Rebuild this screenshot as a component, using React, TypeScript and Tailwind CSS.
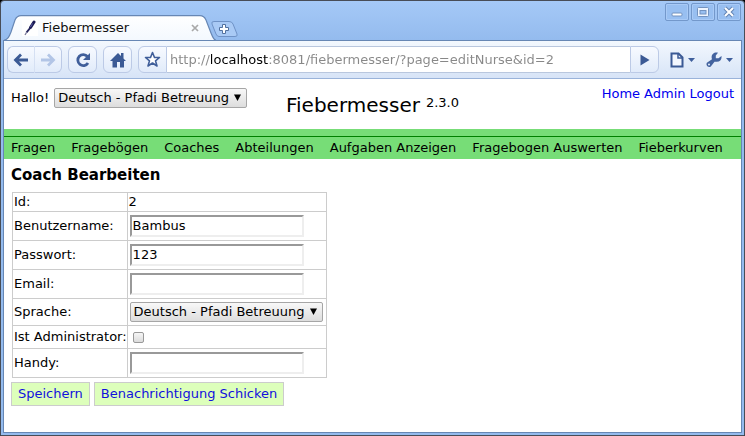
import type { ReactNode } from "react";

const navItems = [
  "Fragen",
  "Fragebögen",
  "Coaches",
  "Abteilungen",
  "Aufgaben Anzeigen",
  "Fragebogen Auswerten",
  "Fieberkurven",
];

function Caret() {
  return (
    <svg width="7" height="4" viewBox="0 0 7 4" aria-hidden="true">
      <path d="M0 0h7L3.5 4z" fill="#3f5f9c" />
    </svg>
  );
}

function WindowButton({ label, children }: { label: string; children: ReactNode }) {
  return (
    <button
      type="button"
      aria-label={label}
      className="flex h-[18px] w-6 items-center justify-center rounded-[2px] border border-[#7398cb] bg-[#98bff1] shadow-[inset_0_0_0_1px_#a9caf6]"
    >
      <svg width="14" height="12" viewBox="0 0 14 12" fill="none" aria-hidden="true">
        {children}
      </svg>
    </button>
  );
}

function TabStrip() {
  return (
    <div className="flex h-[39px] items-end">
      <div className="relative flex h-[25px] w-[212px] items-center pl-[18px]">
        <svg
          className="absolute inset-0"
          width="212"
          height="25"
          viewBox="0 0 212 25"
          aria-hidden="true"
        >
          <defs>
            <linearGradient id="tabFill" x1="0" y1="0" x2="0" y2="1">
              <stop offset="0" stopColor="#ffffff" />
              <stop offset="1" stopColor="#f3f8fe" />
            </linearGradient>
          </defs>
          <path
            d="M0 25.5C4 24 5 22 7 17L11 5Q13 .7 17 .7H196Q200 .7 202 5L207 18C209 23 210 25 213 25.5z"
            fill="url(#tabFill)"
            stroke="#6787b4"
            strokeWidth="1.2"
          />
        </svg>
        <svg className="relative" width="16" height="16" viewBox="0 0 16 16" aria-hidden="true">
          <path d="M0 0h16v16H0z" fill="#fff" />
          <path d="M12 2L8.500 7.500" stroke="#1b1b55" strokeWidth="3" strokeLinecap="round" />
          <path d="M8.500 7.500L4.500 12.500" stroke="#26265e" strokeWidth="2" />
          <path d="M4.500 12.500L3 15" stroke="#777799" strokeWidth="1.300" />
          <path d="M10.500 3.500L8.500 7" stroke="#5c5ca8" strokeWidth="1" />
        </svg>
        <span className="relative ml-1 flex-1 text-[#111]">Fiebermesser</span>
        <button type="button" aria-label="Tab schließen" className="relative mr-[17px]">
          <svg width="8" height="8" viewBox="0 0 8 8" aria-hidden="true">
            <path d="M1 1l6 6M7 1L1 7" stroke="#a9a9a9" strokeWidth="1.700" />
          </svg>
        </button>
      </div>
      <button type="button" aria-label="Neuer Tab" className="-ml-[5px] mb-[3px]">
        <svg width="27" height="16" viewBox="0 0 27 16" fill="none" aria-hidden="true">
          <path
            d="M3 .5H18Q21 .5 22 3L26 13Q27 15.500 24 15.500H8Q6 15.500 5 13L1 3Q0 .5 3 .5z"
            fill="#a9caf5"
            stroke="#6f92c6"
          />
          <path
            d="M11.500 3.500h3v3h3v3h-3v3h-3v-3h-3v-3h3z"
            fill="#fff"
            stroke="#51719f"
          />
        </svg>
      </button>
      <div className="ml-auto flex gap-[2px] self-start pt-[2px]">
        <WindowButton label="Minimieren">
          <rect x="2" y="7" width="10" height="3" rx="1" fill="#fff" stroke="#7392bf" />
        </WindowButton>
        <WindowButton label="Maximieren">
          <rect x="1.500" y="1.500" width="11" height="9" rx="1" fill="#eef5ff" stroke="#7392bf" />
          <rect x="4" y="4.500" width="6" height="3.500" fill="#98bff1" stroke="#7392bf" />
        </WindowButton>
        <WindowButton label="Schließen">
          <path d="M3 2l8 8M11 2l-8 8" stroke="#6485b5" strokeWidth="4" />
          <path d="M3 2l8 8M11 2l-8 8" stroke="#fff" strokeWidth="2" />
        </WindowButton>
      </div>
    </div>
  );
}

const chromeButton =
  "flex h-[27px] items-center justify-center border border-[#bccae6] bg-linear-to-b from-[#f7faff] to-[#e1ebfa]";

function Toolbar() {
  return (
    <div className="flex h-[39px] items-center gap-[6px] border-t border-b border-t-[#6787b4] border-b-[#9ab3da] bg-linear-to-b from-[#f3f8fe] to-[#d7e4f7] px-[3px]">
      <div className="flex">
        <button type="button" aria-label="Zurück" className={`${chromeButton} w-7 rounded-l-md border-r-[#d5e0f3]`}>
          <svg width="16" height="14" viewBox="0 0 16 14" fill="none" aria-hidden="true">
            <path d="M15 7H3M8 1.500L2.500 7 8 12.500" stroke="#3b5a95" strokeWidth="2.800" />
          </svg>
        </button>
        <button type="button" aria-label="Vorwärts" className={`${chromeButton} w-[27px] rounded-r-md border-l-0`}>
          <svg width="16" height="14" viewBox="0 0 16 14" fill="none" aria-hidden="true">
            <path d="M1 7h12M8 1.500L13.500 7 8 12.500" stroke="#b2c5e6" strokeWidth="2.800" />
          </svg>
        </button>
      </div>
      <button type="button" aria-label="Neu laden" className={`${chromeButton} w-[29px] rounded-md`}>
        <svg width="16" height="16" viewBox="0 0 16 16" fill="none" aria-hidden="true">
          <path d="M12.500 4.500A5.500 5.500 0 1 0 13 11" stroke="#3f5e9a" strokeWidth="2.800" />
          <path d="M15 1v7H8z" fill="#3f5e9a" />
        </svg>
      </button>
      <button type="button" aria-label="Startseite" className={`${chromeButton} w-[29px] rounded-md`}>
        <svg width="16" height="16" viewBox="0 0 16 16" aria-hidden="true">
          <path d="M8 1l3 3V1h2.500v5.500L16 9h-2v6.500h-4V10H7v5.500H2.500V9H0z" fill="#3b5a95" />
        </svg>
      </button>
      <div className="flex min-w-0 flex-1">
        <button type="button" aria-label="Lesezeichen" className={`${chromeButton} w-[29px] shrink-0 rounded-l-md`}>
          <svg width="17" height="17" viewBox="0 0 17 17" fill="none" aria-hidden="true">
            <path
              d="M8.500 1.500l2 5h5l-4 3.300 1.500 5.200-4.500-3-4.500 3 1.500-5.200-4-3.300h5z"
              fill="#fff"
              stroke="#3f5e9a"
              strokeWidth="1.600"
              strokeLinejoin="round"
            />
          </svg>
        </button>
        <div className="flex h-[27px] min-w-0 flex-1 items-center border-t border-b border-[#b9c7de] bg-white pl-[3px]">
          <input
            type="text"
            aria-label="Adresse"
            defaultValue="http://localhost:8081/fiebermesser/?page=editNurse&id=2"
            className="w-full bg-[linear-gradient(90deg,#888_0,#888_40px,#000_40px,#000_98px,#888_98px)] bg-clip-text text-transparent outline-none"
          />
        </div>
        <button type="button" aria-label="Los" className={`${chromeButton} w-[29px] shrink-0 rounded-r-md`}>
          <svg width="10" height="12" viewBox="0 0 10 12" aria-hidden="true">
            <path d="M.5 .5L9.500 6l-9 5.500z" fill="#3b5a95" />
          </svg>
        </button>
      </div>
      <div className="flex items-center gap-[11px] px-[5px]">
        <button type="button" aria-label="Seite" className="flex items-center gap-1">
          <svg width="14" height="16" viewBox="0 0 14 16" fill="none" aria-hidden="true">
            <path d="M1.500 1.500h7l4 4v9h-11z" fill="#f3f7fe" stroke="#3b5a95" strokeWidth="2" />
            <path d="M8 1.500v4.500h4.500" stroke="#3b5a95" strokeWidth="1.500" />
          </svg>
          <Caret />
        </button>
        <button type="button" aria-label="Einstellungen" className="flex items-center gap-1">
          <svg width="16" height="16" viewBox="0 0 16 16" aria-hidden="true">
            <path
              d="M12 .8L9.800 3.500v2.700h2.700L15.500 4C16 7.500 14 10.200 10 9.800L8.500 9.800 5 14.200C3 16.600-.8 13.500 .9 10.800L6 7.200C4.500 3.500 7.500-.3 12 .8z"
              fill="#43639f"
            />
            <circle cx="3" cy="12.500" r="1" fill="#e4edfa" />
          </svg>
          <Caret />
        </button>
      </div>
    </div>
  );
}

function LanguageSelect({ id, label }: { id: string; label?: string }) {
  return (
    <span className="relative inline-block align-middle">
      <select
        id={id}
        aria-label={label}
        className="block h-5 w-[193px] appearance-none rounded-[2px] border border-[#a6a6a6] bg-linear-to-b from-[#f8f8f8] to-[#dddddd] pl-[3px] leading-4 text-black outline-none"
      >
        <option>Deutsch - Pfadi Betreuung</option>
      </select>
      <svg
        className="pointer-events-none absolute top-[6px] right-[6px]"
        width="7"
        height="7"
        viewBox="0 0 7 7"
        aria-hidden="true"
      >
        <path d="M0 .5h7L3.500 7z" fill="#000" />
      </svg>
    </span>
  );
}

function FormRow({ id, label, height, children }: { id?: string; label: string; height: string; children: ReactNode }) {
  return (
    <tr className={height}>
      <th scope="row" className="w-px border border-[#ccc] py-0 pr-0 pl-px text-left font-normal whitespace-nowrap">
        {id ? <label htmlFor={id}>{label}</label> : label}
      </th>
      <td className="border border-[#ccc] py-0 pr-0 pl-px">{children}</td>
    </tr>
  );
}

function TextField({ id, value = "" }: { id: string; value?: string }) {
  return (
    <input
      id={id}
      type="text"
      defaultValue={value}
      className="ml-px block h-[22px] w-[174px] border-2 border-t-[#999] border-r-[#eee] border-b-[#eee] border-l-[#999] bg-white px-px pb-[2px] text-black outline-none"
    />
  );
}

const actionButton = "h-6 border border-[#ccc] bg-[#ddffbb] px-[6px] text-[#1111dd]";

function Page() {
  return (
    <main className="flex-1 bg-white">
      <header className="grid h-[50px] grid-cols-[1fr_auto_1fr] items-start px-[7px]">
        <div className="flex items-center gap-[5px] pt-[9px]">
          <span>Hallo!</span>
          <LanguageSelect id="user-language" label="Sprache wählen" />
        </div>
        <div className="flex items-start gap-[6px] pt-[14px]">
          <h1 className="text-[20px] leading-6">Fiebermesser</h1>
          <span className="leading-5">2.3.0</span>
        </div>
        <div className="flex justify-end gap-1 pt-[7px] text-[#0000ee]">
          <a href="#home">Home</a>
          <a href="#admin">Admin</a>
          <a href="#logout">Logout</a>
        </div>
      </header>
      <nav className="bg-[#77dd77] pt-[7px]">
        <ul className="flex h-[23px] items-center gap-4 border-t border-[#008000] px-[7px] whitespace-nowrap">
          {navItems.map((item) => (
            <li key={item}>
              <a href="#nav">{item}</a>
            </li>
          ))}
        </ul>
      </nav>
      <form className="px-[7px]">
        <h2 className="pt-[6px] text-[15px] leading-5 font-bold">Coach Bearbeiten</h2>
        <table className="mt-[7px] ml-px w-[315px] border-collapse">
          <tbody>
            <FormRow label="Id:" height="h-[19px]">2</FormRow>
            <FormRow id="username" label="Benutzername:" height="h-[29px]">
              <TextField id="username" value="Bambus" />
            </FormRow>
            <FormRow id="password" label="Passwort:" height="h-[29px]">
              <TextField id="password" value="123" />
            </FormRow>
            <FormRow id="email" label="Email:" height="h-[29px]">
              <TextField id="email" />
            </FormRow>
            <FormRow id="language" label="Sprache:" height="h-[27px]">
              <div className="flex pl-px">
                <LanguageSelect id="language" />
              </div>
            </FormRow>
            <FormRow id="admin" label="Ist Administrator:" height="h-[23px]">
              <input
                id="admin"
                type="checkbox"
                className="ml-1 block size-[11px] appearance-none rounded-[2px] border border-[#999] bg-linear-to-b from-[#f6f6f6] to-[#dcdcdc]"
              />
            </FormRow>
            <FormRow id="mobile" label="Handy:" height="h-[29px]">
              <TextField id="mobile" />
            </FormRow>
          </tbody>
        </table>
        <div className="flex gap-1 pt-1">
          <button type="button" className={actionButton}>Speichern</button>
          <button type="button" className={actionButton}>Benachrichtigung Schicken</button>
        </div>
      </form>
    </main>
  );
}

export default function App() {
  return (
    <div className="min-h-screen bg-black font-['DejaVu_Sans',sans-serif] text-[13px] leading-4 text-black">
      <div className="flex min-h-screen flex-col rounded-t-[4px] border border-[#484d57] bg-[#94bbee] bg-[linear-gradient(#a5c9f7_0,#94bbee_39px)]">
        <div className="px-[3px]">
          <TabStrip />
        </div>
        <div className="mx-[2px] mb-[2px] flex flex-1 flex-col border-r border-b border-l border-[#6787b4]">
          <Toolbar />
          <Page />
        </div>
      </div>
    </div>
  );
}
